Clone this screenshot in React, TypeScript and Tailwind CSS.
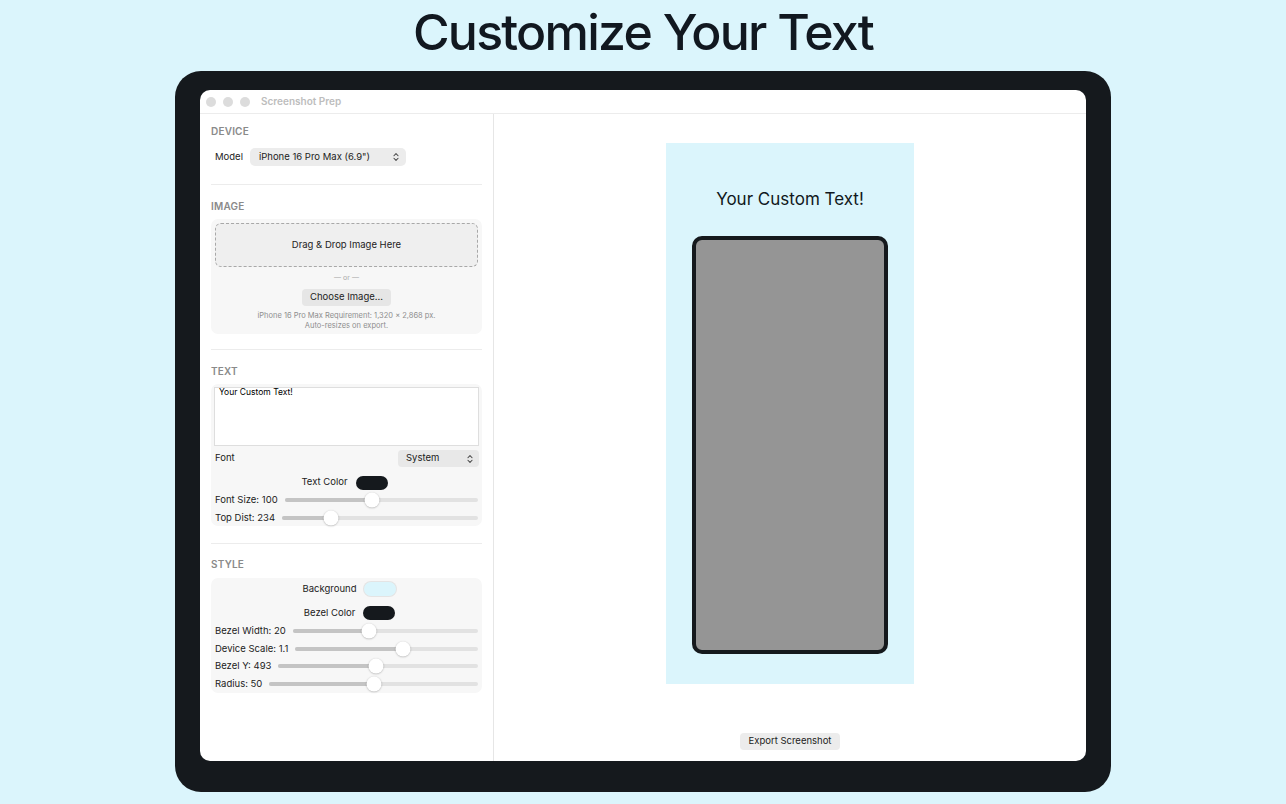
import { ChevronsUpDown } from "lucide-react";

const FONT = { fontFamily: "Inter, 'Noto Sans', sans-serif" };

function Slider({ label, pct }: { label: string; pct: number }) {
  return (
    <div className="flex items-center h-[14px] gap-[7px]">
      <span className="text-[9.5px] text-[#222] whitespace-nowrap">{label}</span>
      <div className="relative flex-1 h-[4px] rounded-full bg-[#e2e2e2]">
        {/* filled part, width from value */}
        <div className="absolute left-0 top-0 h-full rounded-full bg-[#c4c4c4]" style={{ width: `${pct}%` }} />
        <div
          className="absolute top-1/2 -translate-y-1/2 -translate-x-1/2 w-[15px] h-[15px] rounded-full bg-white shadow-[0_0.5px_2px_rgba(0,0,0,0.3)]"
          style={{ left: `${pct}%` }}
        />
      </div>
    </div>
  );
}

function SectionLabel({ children }: { children: string }) {
  return <div className="text-[10px] leading-[14px] font-semibold text-[#8a8a8a] tracking-[0.02em]">{children}</div>;
}

function Swatch({ color, border }: { color: string; border?: boolean }) {
  return (
    <div
      className={`w-[32px] h-[14px] rounded-full ${border ? "ring-1 ring-[#e4e4e4]" : ""}`}
      style={{ backgroundColor: color }}
    />
  );
}

export default function App() {
  return (
    <div className="w-full h-[804px] bg-[#dbf5fc] flex flex-col items-center overflow-hidden" style={FONT}>
      <h1 className="mt-[2px] h-[60px] text-[50px] leading-[60px] font-medium tracking-[-0.035em] text-[#111820]">
        Customize Your Text
      </h1>

      {/* device frame */}
      <div className="mt-[9px] w-[936px] h-[721px] bg-[#15191d] rounded-[26px] pt-[19px] px-[25px] pb-[31px]">
        <div className="w-full h-full bg-white rounded-[10px] flex flex-col overflow-hidden">
          {/* title bar */}
          <div className="h-[24px] shrink-0 flex items-center pl-[6px] border-b border-[#ececec]">
            <div className="flex gap-[7px]">
              <span className="w-[10px] h-[10px] rounded-full bg-[#dcdcdc]" />
              <span className="w-[10px] h-[10px] rounded-full bg-[#dcdcdc]" />
              <span className="w-[10px] h-[10px] rounded-full bg-[#dcdcdc]" />
            </div>
            <span className="ml-[11px] text-[10px] font-semibold text-[#bdbdbd]">Screenshot Prep</span>
          </div>

          <div className="flex-1 flex min-h-0">
            {/* sidebar */}
            <div className="w-[294px] shrink-0 border-r border-[#e6e6e6] px-[11px] pt-[10px] flex flex-col">
              <SectionLabel>DEVICE</SectionLabel>
              <div className="mt-[10px] h-[18px] flex items-center pl-[4px]">
                <span className="text-[9.5px] text-[#222]">Model</span>
                <div className="ml-[7px] w-[156px] h-[18px] rounded-[5px] bg-[#ececec] flex items-center justify-between pl-[9px] pr-[5px]">
                  <span className="text-[9.5px] text-[#222]">iPhone 16 Pro Max (6.9")</span>
                  <ChevronsUpDown size={10} strokeWidth={2.5} className="text-[#444]" />
                </div>
              </div>
              <div className="mt-[18px] h-px bg-[#ececec]" />

              <div className="mt-[14px]">
                <SectionLabel>IMAGE</SectionLabel>
              </div>
              <div className="mt-[6px] bg-[#f7f7f7] rounded-[7px] p-[4px] pb-[3px] flex flex-col items-center">
                <div className="w-full h-[44px] rounded-[6px] border border-dashed border-[#a8a8a8] bg-[#efefef] flex items-center justify-center">
                  <span className="text-[9.5px] text-[#222]">Drag &amp; Drop Image Here</span>
                </div>
                <div className="mt-[6px] h-[10px] text-[7px] leading-[10px] text-[#aaa]">— or —</div>
                <div className="mt-[6px] h-[17px] px-[8px] rounded-[4px] bg-[#e6e6e6] flex items-center text-[9.5px] text-[#222]">
                  Choose Image...
                </div>
                <div className="mt-[5px] text-[7.5px] leading-[10px] text-[#8e8e8e] text-center">
                  iPhone 16 Pro Max Requirement: 1,320 x 2,868 px.
                  <br />
                  Auto-resizes on export.
                </div>
              </div>
              <div className="mt-[15px] h-px bg-[#ececec]" />

              <div className="mt-[14px]">
                <SectionLabel>TEXT</SectionLabel>
              </div>
              <div className="mt-[6px] bg-[#f7f7f7] rounded-[7px] px-[3px] pt-[3px] pb-[1px] flex flex-col">
                <div className="h-[59px] bg-white border border-[#dedede] px-[4px] pt-0 text-[8.5px] leading-[9px] text-black">
                  Your Custom Text!
                </div>
                <div className="mt-[4px] h-[17px] flex items-center justify-between pl-[1px]">
                  <span className="text-[9.5px] text-[#222]">Font</span>
                  <div className="w-[81px] h-[17px] rounded-[4px] bg-[#e8e8e8] flex items-center justify-between pl-[8px] pr-[4px]">
                    <span className="text-[9.5px] text-[#222]">System</span>
                    <ChevronsUpDown size={10} strokeWidth={2.5} className="text-[#444]" />
                  </div>
                </div>
                <div className="mt-[7px] h-[17px] flex items-center justify-center gap-[8px] pr-[4px]">
                  <span className="text-[9.5px] text-[#222]">Text Color</span>
                  <Swatch color="#15191d" />
                </div>
                <div className="mt-[2px] px-[1px]">
                  <Slider label="Font Size: 100" pct={45} />
                </div>
                <div className="mt-[4px] px-[1px]">
                  <Slider label="Top Dist: 234" pct={25} />
                </div>
              </div>
              <div className="mt-[17px] h-px bg-[#ececec]" />

              <div className="mt-[13px]">
                <SectionLabel>STYLE</SectionLabel>
              </div>
              <div className="mt-[7px] bg-[#f7f7f7] rounded-[7px] px-[4px] pt-[3px] pb-[2px] flex flex-col">
                <div className="h-[16px] flex items-center justify-center gap-[8px] pl-[6px]">
                  <span className="text-[9.5px] text-[#222]">Background</span>
                  <Swatch color="#dbf5fc" border />
                </div>
                <div className="mt-[8px] h-[16px] flex items-center justify-center gap-[8px] pl-[6px]">
                  <span className="text-[9.5px] text-[#222]">Bezel Color</span>
                  <Swatch color="#15191d" />
                </div>
                <div className="mt-[3px]">
                  <Slider label="Bezel Width: 20" pct={41} />
                </div>
                <div className="mt-[4px]">
                  <Slider label="Device Scale: 1.1" pct={59} />
                </div>
                <div className="mt-[3px]">
                  <Slider label="Bezel Y: 493" pct={49} />
                </div>
                <div className="mt-[4px]">
                  <Slider label="Radius: 50" pct={50} />
                </div>
              </div>
            </div>

            {/* preview */}
            <div className="flex-1 flex flex-col items-center">
              <div className="mt-[29px] w-[248px] h-[541px] bg-[#dbf5fc] flex flex-col items-center">
                <div className="mt-[44px] h-[24px] text-[17px] leading-[24px] text-[#111820]">Your Custom Text!</div>
                <div className="mt-[25px] w-[196px] h-[418px] rounded-[10px] border-[4px] border-[#15191d] bg-[#959595]" />
              </div>
              <div className="flex-1" />
              <div className="mb-[11px] h-[17px] px-[9px] rounded-[4px] bg-[#ececec] flex items-center text-[9.5px] text-[#222]">
                Export Screenshot
              </div>
            </div>
          </div>
        </div>
      </div>
    </div>
  );
}
